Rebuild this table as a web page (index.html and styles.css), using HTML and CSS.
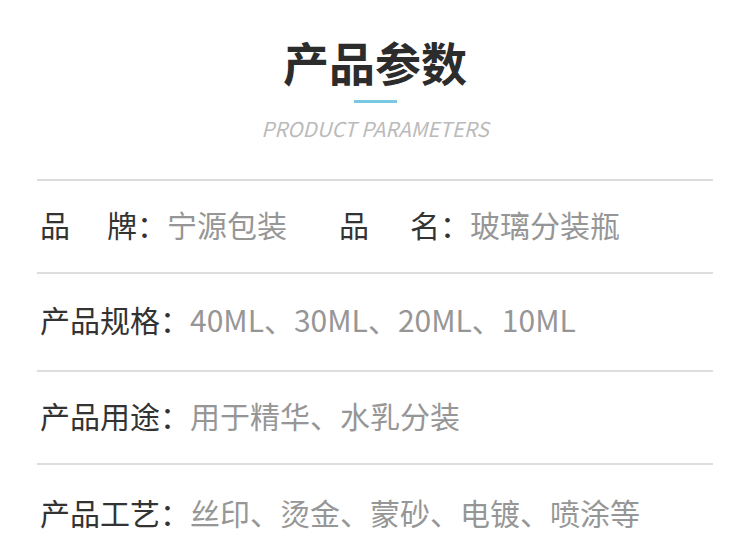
FILE: index.html
```html
<!DOCTYPE html>
<html lang="zh-CN">

<head>
    <meta charset="UTF-8">
    <meta name="viewport" content="width=device-width, initial-scale=1.0">
    <title>产品参数</title>
    <link rel="stylesheet" href="styles.css">
</head>

<body>
    <main>
        <header class="heading">
            <h1>产品参数</h1>
            <span class="bar"></span>
            <p class="sub">PRODUCT PARAMETERS</p>
        </header>
        <ul class="params">
            <li class="row">
                <span class="label"><span class="gap">品</span>牌：</span>
                <span class="value">宁源包装</span>
                <span class="label second"><span class="gap">品</span>名：</span>
                <span class="value">玻璃分装瓶</span>
            </li>
            <li class="row tall">
                <span class="label">产品规格：</span>
                <span class="value">40ML、30ML、20ML、10ML</span>
            </li>
            <li class="row">
                <span class="label">产品用途：</span>
                <span class="value">用于精华、水乳分装</span>
            </li>
            <li class="row last">
                <span class="label">产品工艺：</span>
                <span class="value">丝印、烫金、蒙砂、电镀、喷涂等</span>
            </li>
        </ul>
    </main>
</body>

</html>
```

FILE: styles.css
```css
body {
    background-color: rgb(255, 255, 255);
    color: rgb(51, 51, 51);
    font-family: "Noto Sans CJK SC", "Noto Sans", sans-serif;
    margin: 0;
    padding: 0;
}

main {
    padding: 0 37px;
}

.heading {
    align-items: center;
    display: flex;
    flex-direction: column;
    padding-top: 33px;
}

h1 {
    color: rgb(44, 44, 44);
    font-size: 46px;
    font-weight: 700;
    line-height: 56px;
    margin: 0;
}

.bar {
    background-color: rgb(120, 200, 226);
    display: block;
    height: 3px;
    margin-top: 11px;
    width: 43px;
}

.sub {
    color: rgb(187, 187, 187);
    font-size: 20.5px;
    font-style: italic;
    font-weight: 400;
    line-height: 24px;
    margin: 13px 0 0;
}

.params {
    border-top: 2px solid rgb(221, 221, 221);
    list-style: none;
    margin: 39px 0 0;
    padding: 0;
}

.row {
    align-items: center;
    border-bottom: 2px solid rgb(221, 221, 221);
    box-sizing: border-box;
    display: flex;
    font-size: 30px;
    height: 93px;
    padding: 0 0 6px 3px;
}

.tall {
    height: 98px;
}

.last {
    border-bottom: none;
    padding-bottom: 0;
}

.label {
    color: rgb(51, 51, 51);
}

.gap {
    margin-right: 37px;
}

.second {
    margin-left: 52px;
}

.second .gap {
    margin-right: 41px;
}

.value {
    color: rgb(150, 150, 150);
}
```
